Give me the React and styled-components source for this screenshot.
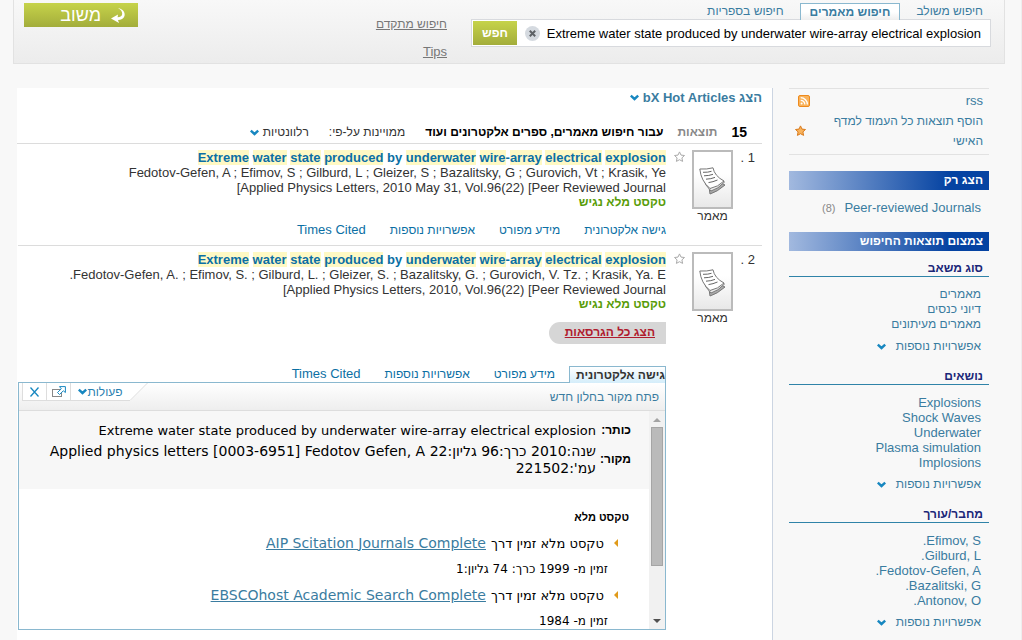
import React from "react";
import styled, { createGlobalStyle, css } from "styled-components";

const GlobalStyle = createGlobalStyle`
  * { box-sizing: border-box; }
  body {
    margin: 0;
    background: #f8f8f8;
    color: #333;
    font: 13px/15px "Liberation Sans", Arial, sans-serif;
  }
  button, input { font: inherit; }
  a { color: inherit; text-decoration: none; }
`;

const Page = styled.div`
  display: flex;
  flex-direction: column;
  min-height: 100vh;
  border-right: 1px solid #eee;
`;

const Header = styled.header`
  display: flex;
  align-items: flex-start;
  height: 64px;
  margin: 0 16px 0 13px;
  padding: 3px 13px 0 10px;
  border: 1px solid #e2e2e2;
  border-top: 0;
  background: linear-gradient(#f8f8f8, #ececec);
`;

const SearchArea = styled.form`
  flex: 0 1 520px;
`;

const ScopeTabs = styled.nav`
  display: flex;
  height: 16px;
  padding-right: 8px;
  color: #3a7ca0;
  font-size: 12px;
`;

const ScopeTab = styled.a`
  height: 17px;
  line-height: 17px;
  white-space: nowrap;
  ${(p) =>
    p.$active &&
    css`
      margin: 0 16px;
      padding: 0 9px;
      border: 1px solid #8ab8cf;
      border-bottom: 0;
      background: linear-gradient(#fff 50%, #eee);
      font-weight: bold;
    `}
`;

const SearchBox = styled.div`
  display: flex;
  align-items: center;
  height: 28px;
  padding: 1px;
  border: 1px solid #d8dade;
  background: #fff;
`;

const SearchInput = styled.input`
  flex: 1;
  min-width: 0;
  padding: 0 8px 0 4px;
  border: 0;
  outline: 0;
  background: transparent;
  color: #000;
`;

const ClearButton = styled.button`
  width: 15px;
  height: 15px;
  margin-left: 8px;
  padding: 0;
  border: 0;
  background: none;
  svg { display: block; }
`;

const SearchButton = styled.button`
  width: 44px;
  height: 24px;
  padding: 0;
  border: 0;
  background: linear-gradient(#c6d34a, #a3ad3b);
  color: #fff;
  font-size: 12px;
  font-weight: bold;
`;

const SearchLinks = styled.nav`
  display: flex;
  flex-direction: column;
  gap: 12px;
  margin: 14px 24px 0 auto;
  color: #777;
  font-size: ${(p) => p.$size}px;
  line-height: 15px;
  a { text-decoration: underline; }
  a:first-child { font-size: 12px; }
`;

const FeedbackButton = styled.button`
  display: flex;
  align-items: center;
  gap: 10px;
  width: 114px;
  height: 24px;
  padding: 0 12px;
  border: 0;
  background: linear-gradient(#c6d34a, #a3ad3b);
  color: #fff;
  font-size: 18px;
`;

const Content = styled.div`
  display: flex;
  flex: 1;
  gap: 16px;
  margin: 24px 32px 0 17px;
`;

const Sidebar = styled.aside`
  flex: none;
  width: 200px;
  color: #3a7ca0;
`;

const ToolList = styled.div`
  padding: 2px 6px 3px;
  border: solid #e2e2e2;
  border-width: 1px 0;
  line-height: 20px;
`;

const Tool = styled.a`
  display: flex;
  align-items: center;
  justify-content: space-between;
  font-size: ${(p) => p.$size}px;
  span { max-width: 156px; }
  svg { margin-left: ${(p) => p.$inset}px; }
`;

const Bar = styled.h2`
  height: 19px;
  margin: 16px 0 0;
  padding: 0 6px;
  background: linear-gradient(to left, #0543a2 20%, #a2b9df);
  color: #fff;
  font-size: 12px;
  line-height: 19px;
`;

const FilterLine = styled.div`
  display: flex;
  align-items: baseline;
  gap: 9px;
  margin-top: 10px;
  padding-right: 8px;
  small { color: #888; font-size: 11px; }
`;

const Facet = styled.section`
  margin-bottom: 15px;
  &:first-of-type { margin-top: 10px; }
`;

const FacetTitle = styled.h3`
  margin: 0;
  padding-right: 6px;
  border-bottom: 1px solid #2f83a8;
  color: #1b2778;
  font-size: 12px;
  line-height: 15px;
`;

const FacetList = styled.ul`
  margin: 10px 0 6px;
  padding: 0 8px 0 0;
  font-size: ${(p) => p.$size}px;
  list-style: none;
`;

const MoreLink = styled.a`
  display: flex;
  align-items: center;
  gap: 10px;
  height: 16px;
  padding-right: 8px;
  font-size: 12px;
`;

const Main = styled.main`
  flex: 1;
  min-width: 0;
  padding-right: 10px;
  border-right: 1px solid #ccd5e2;
  background: #fff;
`;

const HotArticles = styled.a`
  display: flex;
  align-items: center;
  gap: 4px;
  padding-top: 2px;
  color: #3a7ca0;
  font-weight: bold;
`;

const ResultsBar = styled.div`
  display: flex;
  align-items: center;
  margin-top: 20px;
  padding: 0 15px 3px 0;
  border-bottom: 1px solid #dcdcdc;
  font-size: 12px;
`;

const ResultCount = styled.b`
  color: #000;
  font-size: 14px;
`;

const CountLabel = styled.b`
  margin: 0 14px;
  color: #888;
`;

const ScopeLabel = styled.b`
  margin-left: 20px;
  color: #000;
`;

const SortLink = styled.a`
  display: flex;
  align-items: center;
  gap: 4px;
  margin-right: 20px;
`;

const Result = styled.article`
  display: flex;
  margin-left: 1px;
  padding: 6px 7px 7px 0;
  border-bottom: ${(p) => (p.$last ? 0 : "1px solid #dcdcdc")};
`;

const Rank = styled.div`
  flex: none;
  width: 22px;
`;

const Kind = styled.figure`
  flex: none;
  width: 41px;
  margin: 0 0 0 7px;
  font-size: 12px;
  text-align: center;
`;

const Thumb = styled.div`
  display: grid;
  place-items: center;
  height: 59px;
  padding-top: 3px;
  border: 2px solid #bbb;
  background: linear-gradient(#fff 40%, #e8e8e8);
`;

const ShelfButton = styled.button`
  flex: none;
  width: 11px;
  height: 13px;
  margin-left: 8px;
  padding: 0;
  border: 0;
  background: none;
  svg { display: block; }
`;

const ResultBody = styled.div`
  flex: 1;
  min-width: 0;
`;

const Title = styled.h3`
  margin: 0;
  color: #0b6fa4;
  font-size: 13px;
  line-height: 15px;
  mark { background: #fff9c4; color: inherit; }
`;

const SourceLine = styled.div`
  text-align: right;
`;

const FullText = styled.div`
  color: #589c07;
  font-size: 12px;
  font-weight: bold;
`;

const VersionsLink = styled.a`
  display: block;
  width: 117px;
  height: 22px;
  margin-top: 10px;
  padding-right: 11px;
  border-radius: 11px 0 0 11px;
  background: #d6d6d6;
  color: #b01c2e;
  font-size: 12px;
  font-weight: bold;
  line-height: 20px;
  text-decoration: underline;
`;

const ResultTabs = styled.nav`
  display: flex;
  gap: 24px;
  height: 16px;
  margin-top: ${(p) => p.$top}px;
  color: #0b6fa4;
  line-height: 16px;
`;

const ResultTab = styled.a`
  font-size: ${(p) => p.$size}px;
  white-space: nowrap;
  ${(p) =>
    p.$active &&
    css`
      height: 17px;
      margin-left: -10px;
      padding-left: 6px;
      border: 1px solid #8ab8cf;
      border-bottom: 0;
      background: linear-gradient(#fff, #d4edfa);
      color: #333;
      font-weight: bold;
      z-index: 1;
    `}
`;

const Panel = styled.section`
  border: 1px solid #8ab8cf;
`;

const PanelToolbar = styled.div`
  display: flex;
  justify-content: space-between;
  height: 28px;
  padding: 0 6px 0 3px;
  border-bottom: 1px solid #ddd;
  background: linear-gradient(#fff, #eee);
  color: #3a7ca0;
  font-size: 12px;
  line-height: 28px;
`;

const PanelActions = styled.div`
  display: flex;
  height: 18px;
  svg { display: block; }
`;

const ActionButton = styled.button`
  display: flex;
  align-items: center;
  justify-content: center;
  width: ${(p) => p.$width}px;
  padding: 0;
  border: solid #ddd;
  border-width: 0 0 1px 1px;
  background: #fff;
  color: #2a7fb0;
`;

const PanelScroller = styled.div`
  display: flex;
  height: 218px;
  overflow: hidden;
  color: #000;
  font-family: "DejaVu Sans", Verdana, sans-serif;
`;

const Source = styled.div`
  flex: 1;
  min-width: 0;
`;

const Citation = styled.table`
  width: 100%;
  height: 78px;
  padding: 10px 18px 10px 22px;
  border-spacing: 0;
  background: #f7f7f7;
  line-height: 17px;
  th {
    width: 35px;
    padding: 0;
    font: bold 12px/17px "Liberation Sans", Arial, sans-serif;
    text-align: right;
  }
  td { padding: 0; }
  tr:last-child td { font-size: 14px; }
`;

const Holdings = styled.div`
  padding: 20px 20px 0;
  h4 {
    margin: 0;
    font: bold 11px/16px "Liberation Sans", Arial, sans-serif;
  }
`;

const Provider = styled.div`
  display: flex;
  align-items: center;
  gap: 5px;
  height: 26px;
  margin-top: ${(p) => p.$top}px;
  padding-right: 11px;
  svg { margin-left: 5px; }
  a { color: #3a7ca0; font-size: 14px; text-decoration: underline; }
`;

const Coverage = styled.div`
  height: 26px;
  padding-right: 21px;
  font-size: 12px;
  line-height: 26px;
`;

const Scrollbar = styled.div`
  display: flex;
  flex-direction: column;
  align-items: center;
  flex: none;
  width: 16px;
  background: #f1f1f1;
  svg { flex: none; display: block; }
`;

const ScrollThumb = styled.div`
  flex: none;
  width: 12px;
  height: 139px;
  margin-bottom: auto;
  border: 1px solid #a5a5a5;
  background: #bababa;
`;

const Chevron = () => (
  <svg width="9" height="7" viewBox="0 0 9 7" aria-hidden="true">
    <path d="M.8 1.6 L4.5 5 L8.2 1.6" fill="none" stroke="#1787c0" strokeWidth="2.4" />
  </svg>
);

const starPath = "M5.5 .9 L7 4.1 L10.5 4.5 L7.9 6.9 L8.6 10.4 L5.5 8.7 L2.4 10.4 L3.1 6.9 L.5 4.5 L4 4.1 Z";

const Star = ({ fill, stroke }) => (
  <svg width="11" height="12" viewBox="0 0 11 12" aria-hidden="true">
    <path d={starPath} fill={fill} stroke={stroke} strokeLinejoin="round" />
  </svg>
);

const RssIcon = () => (
  <svg width="12" height="12" viewBox="0 0 12 12" aria-hidden="true">
    <rect x=".5" y=".5" width="11" height="11" rx="1.5" fill="#f9b35c" stroke="#ee8a1d" />
    <circle cx="3.6" cy="8.6" r="1" fill="#fff" />
    <path d="M2.7 5.3 A4 4 0 0 1 6.8 9.5 M2.7 2.7 A6.7 6.7 0 0 1 9.4 9.5" fill="none" stroke="#fff" strokeWidth="1.3" />
  </svg>
);

const ClearIcon = () => (
  <svg width="15" height="15" viewBox="0 0 15 15" aria-hidden="true">
    <circle cx="7.5" cy="7.5" r="7.5" fill="#d5dae0" />
    <path d="M4.8 4.8 L10.2 10.2 M10.2 4.8 L4.8 10.2" stroke="#5e6266" strokeWidth="2" />
  </svg>
);

const ReplyIcon = () => (
  <svg width="15" height="15" viewBox="0 0 15 15" aria-hidden="true">
    <path d="M7 0 C12 1 14.5 4.5 13.5 8 C12.7 10.8 10 12 7 12 L8 15 L0 10.5 L7 6.5 L6.6 9.3 C9.5 9.3 11.2 7.8 11.2 5.7 C11.2 3.5 9.7 1.5 7 0 Z" fill="#fff" />
  </svg>
);

const PaperIcon = () => (
  <svg width="27" height="29" viewBox="0 0 27 29" aria-hidden="true">
    <path d="M10 20 L11 27 Q18 25 26 18 L20 15 Z" fill="#aaa" stroke="#777" />
    <path d="M4 10 Q6 19 12 24 Q19 22 25.5 15 L20 12 Z" fill="#eee" stroke="#777" />
    <path d="M.8 2 Q8 2.5 14 .8 Q15.5 9 25 14 Q19 20 11 21.5 Q2 14 .8 2 Z" fill="#fff" stroke="#777" />
    <path d="M4 5.3 Q9 5.5 12.5 4.3 M5 8.8 Q10 8.8 14 7.3 M7 12.2 Q12 12 16 10.4 M9.5 15.6 Q14 15 18.5 13" fill="none" stroke="#666" />
  </svg>
);

const PopupIcon = () => (
  <svg width="14" height="12" viewBox="0 0 14 12" aria-hidden="true">
    <rect x=".5" y="3.5" width="9" height="7" fill="none" stroke="#888" />
    <path d="M7.5 .6 H13.4 V6.5 L11.3 4.8 L7.5 8.5 L5.5 6.5 L9.3 2.8 Z" fill="#fff" stroke="#1787c0" />
  </svg>
);

const Slant = () => (
  <svg width="18" height="18" viewBox="0 0 18 18" aria-hidden="true">
    <path d="M0 0 H18 L0 18 Z" fill="#fff" />
    <path d="M0 17.5 L17.5 0" stroke="#ddd" />
  </svg>
);

const Bullet = () => (
  <svg width="4" height="8" viewBox="0 0 4 8" aria-hidden="true">
    <path d="M4 0 V8 L0 4 Z" fill="#e09a1a" />
  </svg>
);

const ScrollArrow = ({ up }) => (
  <svg width="16" height="16" viewBox="0 0 16 16" aria-hidden="true">
    {up ? <path d="M4 11 H12 L8 7 Z" fill="#a3a3a3" /> : <path d="M4 6 H12 L8 10 Z" fill="#505050" />}
  </svg>
);

const facets = [
  { title: "סוג משאב", size: 12, items: ["מאמרים", "דיוני כנסים", "מאמרים מעיתונים"] },
  {
    title: "נושאים",
    size: 13,
    items: ["Explosions", "Shock Waves", "Underwater", "Plasma simulation", "Implosions"],
  },
  {
    title: "מחבר/עורך",
    size: 13,
    items: ["Efimov, S.", "Gilburd, L.", "Fedotov-Gefen, A.", "Bazalitski, G.", "Antonov, O."],
  },
];

const query = "Extreme water state produced by underwater wire-array electrical explosion";

const results = [
  {
    authors: "Fedotov-Gefen, A ; Efimov, S ; Gilburd, L ; Gleizer, S ; Bazalitsky, G ; Gurovich, Vt ; Krasik, Ye",
    source: "[Applied Physics Letters, 2010 May 31, Vol.96(22) [Peer Reviewed Journal",
  },
  {
    authors: "Fedotov-Gefen, A. ; Efimov, S. ; Gilburd, L. ; Gleizer, S. ; Bazalitsky, G. ; Gurovich, V. Tz. ; Krasik, Ya. E.",
    source: "[Applied Physics Letters, 2010, Vol.96(22) [Peer Reviewed Journal",
    open: true,
  },
];

const tabs = [
  { name: "גישה אלקטרונית", size: 12 },
  { name: "מידע מפורט", size: 12 },
  { name: "אפשרויות נוספות", size: 12 },
  { name: "Times Cited", size: 13 },
];

const HighlightedTitle = () => (
  <Title>
    <a href="#record" dir="ltr">
      {query.split(/([ -])/).map((word, i) =>
        /^([ -]|by)$/.test(word) ? word : <mark key={i}>{word}</mark>
      )}
    </a>
  </Title>
);

const SourcePanel = () => (
  <Panel>
    <PanelToolbar>
      <a href="#source">פתח מקור בחלון חדש</a>
      <PanelActions dir="ltr">
        <ActionButton type="button" $width={24} aria-label="סגור">
          <svg width="9" height="10" viewBox="0 0 9 10">
            <path d="M.5 .5 L8.5 9.5 M8.5 .5 L.5 9.5" stroke="#1787c0" strokeWidth="1.3" />
          </svg>
        </ActionButton>
        <ActionButton type="button" $width={24} aria-label="חלון חדש">
          <PopupIcon />
        </ActionButton>
        <ActionButton type="button" $width={60}>
          <Chevron />
          פעולות
        </ActionButton>
        <Slant />
      </PanelActions>
    </PanelToolbar>
    <PanelScroller>
      <Scrollbar>
        <ScrollArrow up />
        <ScrollThumb />
        <ScrollArrow />
      </Scrollbar>
      <Source>
        <Citation>
          <tbody>
            <tr>
              <th scope="row">כותר:</th>
              <td>{query}</td>
            </tr>
            <tr>
              <th scope="row">מקור:</th>
              <td>
                שנה:2010 כרך:96 גליון:22 <bdi>Applied physics letters [0003-6951] Fedotov Gefen, A</bdi> עמ':221502
              </td>
            </tr>
          </tbody>
        </Citation>
        <Holdings>
          <h4>טקסט מלא</h4>
          <Provider $top={5}>
            <Bullet />
            <span>טקסט מלא זמין דרך</span>
            <a href="#aip">AIP Scitation Journals Complete</a>
          </Provider>
          <Coverage>זמין מ- 1999 כרך: 74 גליון:1</Coverage>
          <Provider $top={0}>
            <Bullet />
            <span>טקסט מלא זמין דרך</span>
            <a href="#ebsco">EBSCOhost Academic Search Complete</a>
          </Provider>
          <Coverage>זמין מ- 1984</Coverage>
        </Holdings>
      </Source>
    </PanelScroller>
  </Panel>
);

export default function App() {
  return (
    <Page dir="rtl">
      <GlobalStyle />
      <Header>
        <SearchArea onSubmit={(e) => e.preventDefault()}>
          <ScopeTabs>
            <ScopeTab href="#all">חיפוש משולב</ScopeTab>
            <ScopeTab href="#articles" $active>חיפוש מאמרים</ScopeTab>
            <ScopeTab href="#libraries">חיפוש בספריות</ScopeTab>
          </ScopeTabs>
          <SearchBox>
            <SearchInput aria-label="חיפוש" defaultValue={query} />
            <ClearButton type="button" aria-label="נקה">
              <ClearIcon />
            </ClearButton>
            <SearchButton>חפש</SearchButton>
          </SearchBox>
        </SearchArea>
        <SearchLinks $size={13}>
          <a href="#advanced">חיפוש מתקדם</a>
          <a href="#tips">Tips</a>
        </SearchLinks>
        <FeedbackButton type="button">
          <ReplyIcon />
          משוב
        </FeedbackButton>
      </Header>
      <Content>
        <Sidebar>
          <ToolList>
            <Tool href="#rss" $inset={3} $size={13}>
              <span>rss</span>
              <RssIcon />
            </Tool>
            <Tool href="#shelf" $inset={0} $size={12}>
              <span>הוסף תוצאות כל העמוד למדף האישי</span>
              <Star fill="#f9b35c" stroke="#d97a1c" />
            </Tool>
          </ToolList>
          <Bar>הצג רק</Bar>
          <FilterLine>
            <a href="#peer">Peer-reviewed Journals</a>
            <small>(8)</small>
          </FilterLine>
          <Bar>צמצום תוצאות החיפוש</Bar>
          {facets.map((facet) => (
            <Facet key={facet.title}>
              <FacetTitle>{facet.title}</FacetTitle>
              <FacetList $size={facet.size}>
                {facet.items.map((item) => (
                  <li key={item}>
                    <a href="#facet">{item}</a>
                  </li>
                ))}
              </FacetList>
              <MoreLink href="#more">
                אפשרויות נוספות
                <Chevron />
              </MoreLink>
            </Facet>
          ))}
        </Sidebar>
        <Main>
          <HotArticles href="#hot">
            הצג bX Hot Articles
            <Chevron />
          </HotArticles>
          <ResultsBar>
            <ResultCount>15</ResultCount>
            <CountLabel>תוצאות</CountLabel>
            <ScopeLabel>עבור חיפוש מאמרים, ספרים אלקטרונים ועוד</ScopeLabel>
            <span>ממויינות על-פי:</span>
            <SortLink href="#sort">
              רלוונטיות
              <Chevron />
            </SortLink>
          </ResultsBar>
          {results.map((result, i) => (
            <Result key={i} $last={result.open}>
              <Rank>{i + 1} .</Rank>
              <Kind>
                <Thumb>
                  <PaperIcon />
                </Thumb>
                <figcaption>מאמר</figcaption>
              </Kind>
              <ShelfButton type="button" aria-label="הוסף למדף">
                <Star fill="#fff" stroke="#aaa" />
              </ShelfButton>
              <ResultBody>
                <HighlightedTitle />
                <div>{result.authors}</div>
                <SourceLine dir="ltr">{result.source}</SourceLine>
                <FullText>טקסט מלא נגיש</FullText>
                {result.open && <VersionsLink href="#versions">הצג כל הגרסאות</VersionsLink>}
                <ResultTabs $top={result.open ? 22 : 12}>
                  {tabs.map((tab, t) => (
                    <ResultTab key={tab.name} href="#tab" $size={tab.size} $active={result.open && t === 0}>
                      {tab.name}
                    </ResultTab>
                  ))}
                </ResultTabs>
                {result.open && <SourcePanel />}
              </ResultBody>
            </Result>
          ))}
        </Main>
      </Content>
    </Page>
  );
}
